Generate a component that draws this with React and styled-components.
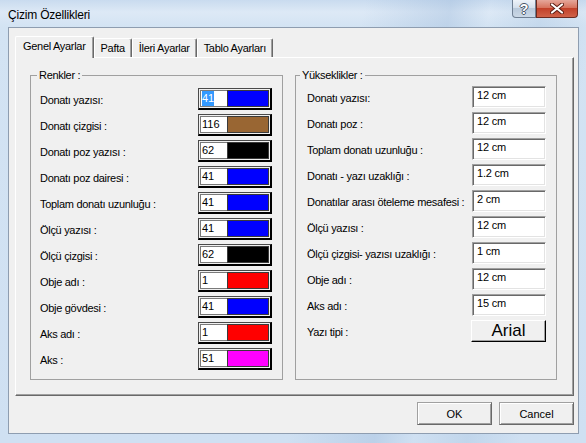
import React from 'react';
import styled, { createGlobalStyle } from 'styled-components';

const Global = createGlobalStyle`
  body {
    margin: 0;
    background: #ffffff;
    font-family: "Liberation Sans", Arial, sans-serif;
  }
`;

const colorRows = [
  { label: 'Donatı yazısı:', value: '41', color: '#0000ff', selected: true },
  { label: 'Donatı çizgisi :', value: '116', color: '#996633' },
  { label: 'Donatı poz yazısı :', value: '62', color: '#000000' },
  { label: 'Donatı poz dairesi :', value: '41', color: '#0000ff' },
  { label: 'Toplam donatı uzunluğu :', value: '41', color: '#0000ff' },
  { label: 'Ölçü yazısı :', value: '41', color: '#0000ff' },
  { label: 'Ölçü çizgisi :', value: '62', color: '#000000' },
  { label: 'Obje adı :', value: '1', color: '#ff0000' },
  { label: 'Obje gövdesi :', value: '41', color: '#0000ff' },
  { label: 'Aks adı :', value: '1', color: '#ff0000' },
  { label: 'Aks :', value: '51', color: '#ff00ff' },
];

const heightRows = [
  { label: 'Donatı yazısı:', value: '12 cm' },
  { label: 'Donatı poz :', value: '12 cm' },
  { label: 'Toplam donatı uzunluğu :', value: '12 cm' },
  { label: 'Donatı - yazı uzaklığı :', value: '1.2 cm' },
  { label: 'Donatılar arası öteleme mesafesi :', value: '2 cm' },
  { label: 'Ölçü yazısı :', value: '12 cm' },
  { label: 'Ölçü çizgisi- yazısı uzaklığı :', value: '1 cm' },
  { label: 'Obje adı :', value: '12 cm' },
  { label: 'Aks adı :', value: '15 cm' },
];

const tabs = ['Genel Ayarlar', 'Pafta', 'İleri Ayarlar', 'Tablo Ayarları'];

const Window = styled.div`
  width: 586px;
  height: 443px;
  box-sizing: border-box;
  padding: 0 7px 9px 8px;
  display: flex;
  flex-direction: column;
  background:
    linear-gradient(100deg, rgba(255,255,255,0) 55%, rgba(150,180,215,0.35) 68%, rgba(255,255,255,0) 74%, rgba(160,190,220,0.3) 82%, rgba(255,255,255,0) 90%),
    linear-gradient(180deg, #c9dbef 0px, #dde9f6 12px, #d3e3f3 27px, #cfe0f2 100%);
`;

const TitleBar = styled.div`
  height: 27px;
  display: flex;
  justify-content: space-between;
  align-items: flex-start;
`;

const Title = styled.div`
  padding-top: 8px;
  font-size: 12px;
  line-height: 14px;
  letter-spacing: -0.2px;
  color: #000;
`;

const Caption = styled.div`
  display: flex;
  margin-right: 1px;
`;

const CaptionButton = styled.div`
  height: 18px;
  width: ${p => p.$w}px;
  box-sizing: border-box;
  display: flex;
  align-items: center;
  justify-content: center;
  border: 1px solid ${p => (p.$close ? '#6b2a20' : '#6f7f93')};
  border-top: none;
  border-radius: ${p => (p.$close ? '0 0 4px 0' : '0 0 0 4px')};
  background: ${p =>
    p.$close
      ? 'linear-gradient(180deg, #e5a79b 0%, #d7745f 45%, #c2412a 50%, #d06249 100%)'
      : 'linear-gradient(180deg, #eef3f9 0%, #d5e0ec 45%, #b9c9db 50%, #cbd8e6 100%)'};
`;

const HelpGlyph = styled.span`
  font: bold 14px/1 "Liberation Sans", Arial, sans-serif;
  color: #fff;
  text-shadow: -1px 0 #4a5668, 1px 0 #4a5668, 0 -1px #4a5668, 0 1px #4a5668;
`;

const Client = styled.div`
  flex: 1;
  background: #f0f0f0;
  border: 1px solid #8e9db0;
  padding: 8px 4px 0 6px;
  display: flex;
  flex-direction: column;
`;

const TabStrip = styled.div`
  height: 21px;
  display: flex;
  align-items: flex-end;
`;

const Tab = styled.div`
  position: relative;
  z-index: ${p => (p.$active ? 1 : 0)};
  height: ${p => (p.$active ? 22 : 19)}px;
  margin-bottom: ${p => (p.$active ? -1 : 0)}px;
  box-sizing: border-box;
  padding: ${p => (p.$active ? '0 7px 3px' : '0 6px')};
  display: flex;
  align-items: center;
  background: #f0f0f0;
  border-top: 1px solid #fff;
  border-left: 1px solid #fff;
  border-right: 1px solid #696969;
  border-radius: 2px 2px 0 0;
  box-shadow: inset -1px 0 #a0a0a0;
  font-size: 11px;
  letter-spacing: -0.3px;
  color: #000;
  white-space: nowrap;
`;

const Panel = styled.div`
  height: 339px;
  box-sizing: border-box;
  border: 1px solid;
  border-color: #fff #696969 #696969 #fff;
  box-shadow: inset -1px -1px #a0a0a0;
  padding: 10px 15px 15px 14px;
  display: grid;
  grid-template-columns: 253px 262px;
  column-gap: 12px;
`;

const Group = styled.fieldset`
  margin: 0;
  min-width: 0;
  border: 1px solid #a0a0a0;
  padding: ${p => p.$top}px 10px 0 ${p => p.$left}px;
  display: flex;
  flex-direction: column;
  gap: 4px;
`;

const Legend = styled.legend`
  margin-left: ${p => p.$offset}px;
  padding: 0 2px;
  font-size: 11px;
  line-height: 14px;
  letter-spacing: -0.3px;
  color: #000;
`;

const Row = styled.div`
  height: 22px;
  display: flex;
  align-items: center;
  justify-content: space-between;
`;

const Label = styled.span`
  font-size: 11px;
  letter-spacing: -0.3px;
  color: #000;
  padding-top: 2px;
  white-space: nowrap;
`;

const ColorPick = styled.div`
  width: 74px;
  height: 22px;
  box-sizing: border-box;
  border: 1px solid;
  border-color: #4a4a4a #000 #000 #4a4a4a;
  border-right-width: 2px;
  border-bottom-width: 2px;
  padding: 1px;
  background: #f0f0f0;
  display: flex;
`;

const ColorNumber = styled.div`
  width: 27px;
  box-sizing: border-box;
  border: 1px solid #7a7a7a;
  border-right: none;
  background: #fff;
  padding-left: 1px;
  display: flex;
  align-items: center;
  font-size: 11px;
  color: #000;
`;

const Highlight = styled.span`
  background: ${p => (p.$on ? '#3399ff' : 'transparent')};
  color: ${p => (p.$on ? '#fff' : '#000')};
  line-height: 15px;
`;

const Swatch = styled.div`
  flex: 1;
  border: 1px solid #3a3a3a;
  background: ${p => p.$color};
`;

const Field = styled.div`
  width: 74px;
  height: 22px;
  box-sizing: border-box;
  background: #fff;
  border: 1px solid;
  border-color: #a0a0a0 #fff #fff #a0a0a0;
  box-shadow: inset 1px 1px #696969, inset -1px -1px #e3e3e3;
  padding: 2px 3px 0 4px;
  font-size: 11px;
  line-height: 13px;
  letter-spacing: -0.2px;
  color: #000;
`;

const FontButton = styled.div`
  width: 75px;
  height: 22px;
  box-sizing: border-box;
  border: 1px solid;
  border-color: #fff #000 #000 #fff;
  box-shadow: inset -1px -1px #a0a0a0;
  display: flex;
  align-items: center;
  justify-content: center;
  font-size: 17px;
  color: #000;
`;

const Footer = styled.div`
  display: flex;
  justify-content: flex-end;
  gap: 7px;
  padding-top: 6px;
`;

const Button = styled.div`
  width: 75px;
  height: 23px;
  box-sizing: border-box;
  border: 1px solid;
  border-color: #a0a0a0 #696969 #696969 #a0a0a0;
  box-shadow: inset 1px 1px #fff, inset -1px -1px #a0a0a0;
  display: flex;
  align-items: center;
  justify-content: center;
  font-size: 11px;
  color: #000;
`;

function CloseIcon() {
  return (
    <svg width="14" height="11" viewBox="0 0 14 11">
      <path d="M2 1.5 L12 9.5 M12 1.5 L2 9.5" stroke="#5a1c12" strokeWidth="4" strokeLinecap="round" />
      <path d="M2 1.5 L12 9.5 M12 1.5 L2 9.5" stroke="#ffffff" strokeWidth="2.2" strokeLinecap="round" />
    </svg>
  );
}

export default function App() {
  return (
    <>
      <Global />
      <Window>
        <TitleBar>
          <Title>Çizim Özellikleri</Title>
          <Caption>
            <CaptionButton $w={24}>
              <HelpGlyph>?</HelpGlyph>
            </CaptionButton>
            <CaptionButton $w={42} $close>
              <CloseIcon />
            </CaptionButton>
          </Caption>
        </TitleBar>
        <Client>
          <TabStrip>
            {tabs.map((t, i) => (
              <Tab key={t} $active={i === 0}>{t}</Tab>
            ))}
          </TabStrip>
          <Panel>
            <Group $top={6} $left={9}>
              <Legend $offset={-3}>Renkler :</Legend>
              {colorRows.map(r => (
                <Row key={r.label}>
                  <Label>{r.label}</Label>
                  <ColorPick>
                    <ColorNumber>
                      <Highlight $on={r.selected}>{r.value}</Highlight>
                    </ColorNumber>
                    <Swatch $color={r.color} />
                  </ColorPick>
                </Row>
              ))}
            </Group>
            <Group $top={4} $left={11}>
              <Legend $offset={-7}>Yükseklikler :</Legend>
              {heightRows.map(r => (
                <Row key={r.label}>
                  <Label>{r.label}</Label>
                  <Field>{r.value}</Field>
                </Row>
              ))}
              <Row>
                <Label>Yazı tipi :</Label>
                <FontButton>Arial</FontButton>
              </Row>
            </Group>
          </Panel>
          <Footer>
            <Button>OK</Button>
            <Button>Cancel</Button>
          </Footer>
        </Client>
      </Window>
    </>
  );
}
